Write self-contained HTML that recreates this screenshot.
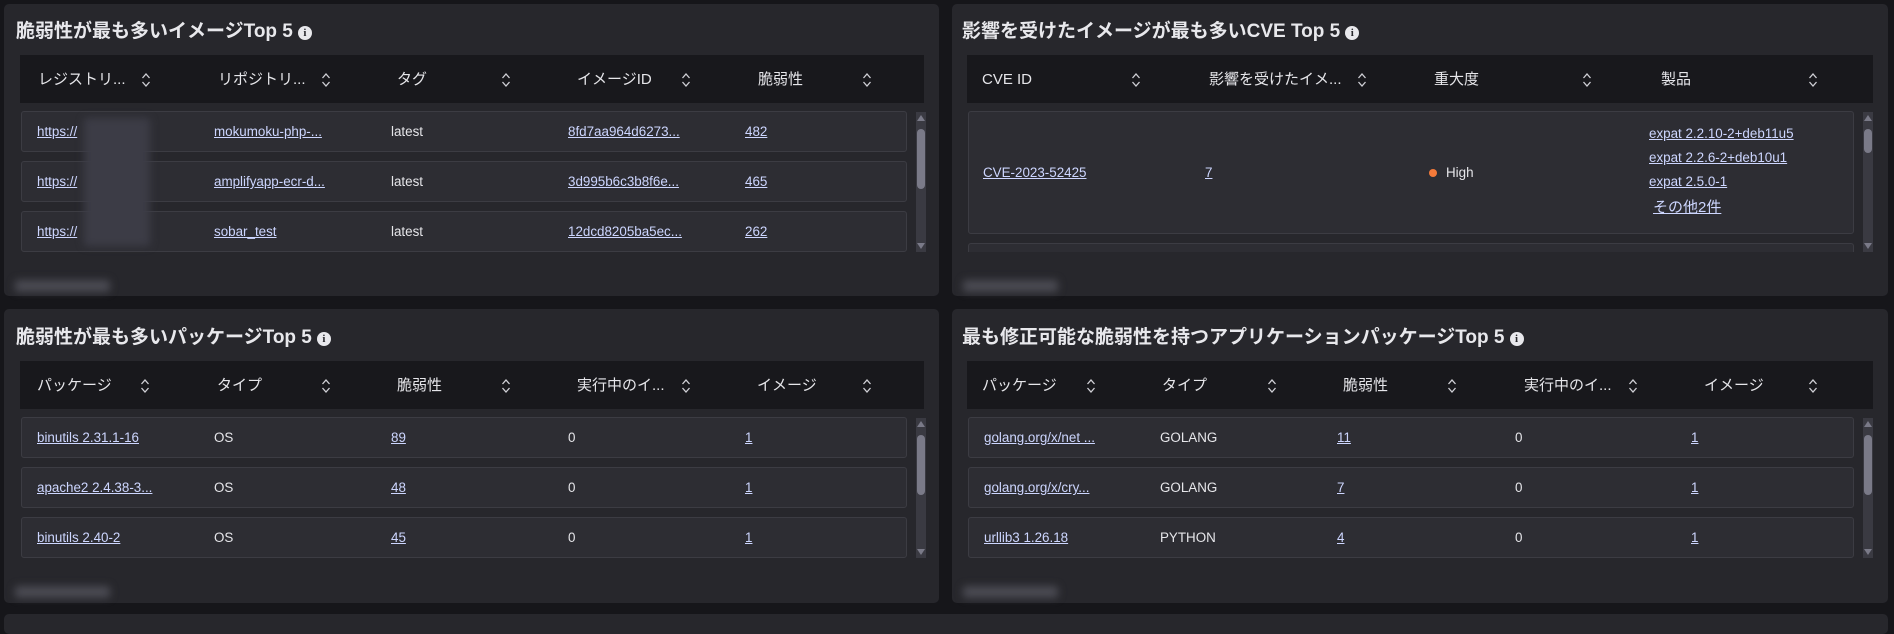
<!DOCTYPE html>
<html><head><meta charset="utf-8">
<style>
*{margin:0;padding:0;box-sizing:border-box}
body{width:1894px;height:619px;background:#16161a;font-family:"Liberation Sans","Noto Sans CJK JP",sans-serif;color:#e6e6ea;position:relative;overflow:hidden}
.p{position:absolute;background:#27272c;border-radius:5px}
.t{position:absolute;font-size:19px;font-weight:bold;color:#e8e8ec;white-space:nowrap;line-height:24px}
.t .i{display:inline-block;width:14px;height:14px;border-radius:50%;background:#e8e8ec;color:#27272c;font-size:11px;text-align:center;line-height:14px;font-family:"Liberation Serif",serif;margin-left:5px;vertical-align:1px}
.h{position:absolute;background:#18181c;height:48px}
.h span{position:absolute;top:16px;font-size:15px;line-height:18px;white-space:nowrap;color:#e6e6ea}
.h svg{position:absolute;top:17px}
.r{position:absolute;background:#2d2d33;border:1px solid #3c3c43;border-radius:3px;height:41px}
.c{position:absolute;font-size:13.4px;white-space:nowrap;line-height:16px}
a,.l{color:#cdd6ff;text-decoration:underline}
.sb{position:absolute;width:10px;background:#3a3a42}
.sb .th{position:absolute;left:1px;width:8px;background:#7a7a88;border-radius:4px}
.sb .up,.sb .dn{position:absolute;left:1px;width:0;height:0;border-left:4px solid transparent;border-right:4px solid transparent}
.sb .up{top:3px;border-bottom:6px solid #7a7a88}
.sb .dn{bottom:3px;border-top:6px solid #7a7a88}
.bl{position:absolute;background:#4a4a52;filter:blur(4px);border-radius:3px}
</style></head><body>

<svg width="0" height="0" style="position:absolute"><defs><symbol id="s" viewBox="0 0 10 16"><path d="M1.5 6 L5 2 L8.5 6 M1.5 10 L5 14 L8.5 10" fill="none" stroke="#d0d0d6" stroke-width="1.3"/></symbol></defs></svg>

<!-- Panel 1 -->
<div class="p" style="left:4px;top:4px;width:935px;height:292px"></div>
<div class="t" style="left:16px;top:20px">脆弱性が最も多いイメージTop 5<span class="i">i</span></div>
<div class="h" style="left:20px;top:55px;width:904px">
<span style="left:18px">レジストリ...</span><svg style="left:121px" width="10" height="16"><use href="#s"/></svg>
<span style="left:198px">リポジトリ...</span><svg style="left:301px" width="10" height="16"><use href="#s"/></svg>
<span style="left:377px">タグ</span><svg style="left:481px" width="10" height="16"><use href="#s"/></svg>
<span style="left:557px">イメージID</span><svg style="left:661px" width="10" height="16"><use href="#s"/></svg>
<span style="left:738px">脆弱性</span><svg style="left:842px" width="10" height="16"><use href="#s"/></svg>
</div>
<div class="r" style="left:21px;top:111px;width:886px"></div>
<div class="r" style="left:21px;top:161px;width:886px"></div>
<div class="r" style="left:21px;top:211px;width:886px"></div>
<div class="c" style="left:37px;top:124px"><span class="l">https://</span></div>
<div class="c" style="left:214px;top:124px"><span class="l">mokumoku-php-...</span></div>
<div class="c" style="left:391px;top:124px">latest</div>
<div class="c" style="left:568px;top:124px"><span class="l">8fd7aa964d6273...</span></div>
<div class="c" style="left:745px;top:124px"><span class="l">482</span></div>
<div class="c" style="left:37px;top:174px"><span class="l">https://</span></div>
<div class="c" style="left:214px;top:174px"><span class="l">amplifyapp-ecr-d...</span></div>
<div class="c" style="left:391px;top:174px">latest</div>
<div class="c" style="left:568px;top:174px"><span class="l">3d995b6c3b8f6e...</span></div>
<div class="c" style="left:745px;top:174px"><span class="l">465</span></div>
<div class="c" style="left:37px;top:224px"><span class="l">https://</span></div>
<div class="c" style="left:214px;top:224px"><span class="l">sobar_test</span></div>
<div class="c" style="left:391px;top:224px">latest</div>
<div class="c" style="left:568px;top:224px"><span class="l">12dcd8205ba5ec...</span></div>
<div class="c" style="left:745px;top:224px"><span class="l">262</span></div>
<div class="bl" style="left:84px;top:118px;width:66px;height:128px;background:#3c3c46"></div>
<div class="sb" style="left:916px;top:112px;height:140px"><div class="up"></div><div class="th" style="top:17px;height:60px"></div><div class="dn"></div></div>
<div class="bl" style="left:15px;top:280px;width:95px;height:12px"></div>

<!-- Panel 2 -->
<div class="p" style="left:952px;top:4px;width:936px;height:292px"></div>
<div class="t" style="left:962px;top:20px">影響を受けたイメージが最も多いCVE Top 5<span class="i">i</span></div>
<div class="h" style="left:967px;top:55px;width:906px">
<span style="left:15px">CVE ID</span><svg style="left:164px" width="10" height="16"><use href="#s"/></svg>
<span style="left:242px">影響を受けたイメ...</span><svg style="left:390px" width="10" height="16"><use href="#s"/></svg>
<span style="left:467px">重大度</span><svg style="left:615px" width="10" height="16"><use href="#s"/></svg>
<span style="left:694px">製品</span><svg style="left:841px" width="10" height="16"><use href="#s"/></svg>
</div>
<div class="r" style="left:968px;top:111px;width:886px;height:123px"></div>
<div style="position:absolute;left:968px;top:243px;width:886px;height:9px;background:#2d2d33;border:1px solid #3c3c43;border-bottom:none;border-radius:3px 3px 0 0"></div>
<div class="c" style="left:983px;top:165px"><span class="l">CVE-2023-52425</span></div>
<div class="c" style="left:1205px;top:165px"><span class="l">7</span></div>
<div style="position:absolute;left:1429px;top:169px;width:8px;height:8px;border-radius:50%;background:#f47a3a"></div>
<div class="c" style="left:1446px;top:165px">High</div>
<div class="c" style="left:1649px;top:126px"><span class="l">expat 2.2.10-2+deb11u5</span></div>
<div class="c" style="left:1649px;top:150px"><span class="l">expat 2.2.6-2+deb10u1</span></div>
<div class="c" style="left:1649px;top:174px"><span class="l">expat 2.5.0-1</span></div>
<div class="c" style="left:1653px;top:199px;font-size:15px;line-height:18px"><span class="l">その他2件</span></div>
<div class="sb" style="left:1863px;top:112px;height:140px"><div class="up"></div><div class="th" style="top:17px;height:24px"></div><div class="dn"></div></div>
<div class="bl" style="left:963px;top:280px;width:95px;height:12px"></div>

<!-- Panel 3 -->
<div class="p" style="left:4px;top:309px;width:935px;height:294px"></div>
<div class="t" style="left:16px;top:326px">脆弱性が最も多いパッケージTop 5<span class="i">i</span></div>
<div class="h" style="left:20px;top:361px;width:904px">
<span style="left:17px">パッケージ</span><svg style="left:120px" width="10" height="16"><use href="#s"/></svg>
<span style="left:197px">タイプ</span><svg style="left:301px" width="10" height="16"><use href="#s"/></svg>
<span style="left:377px">脆弱性</span><svg style="left:481px" width="10" height="16"><use href="#s"/></svg>
<span style="left:557px">実行中のイ...</span><svg style="left:661px" width="10" height="16"><use href="#s"/></svg>
<span style="left:737px">イメージ</span><svg style="left:842px" width="10" height="16"><use href="#s"/></svg>
</div>
<div class="r" style="left:21px;top:417px;width:886px"></div>
<div class="r" style="left:21px;top:467px;width:886px"></div>
<div class="r" style="left:21px;top:517px;width:886px"></div>
<div class="c" style="left:37px;top:430px"><span class="l">binutils 2.31.1-16</span></div>
<div class="c" style="left:214px;top:430px">OS</div>
<div class="c" style="left:391px;top:430px"><span class="l">89</span></div>
<div class="c" style="left:568px;top:430px">0</div>
<div class="c" style="left:745px;top:430px"><span class="l">1</span></div>
<div class="c" style="left:37px;top:480px"><span class="l">apache2 2.4.38-3...</span></div>
<div class="c" style="left:214px;top:480px">OS</div>
<div class="c" style="left:391px;top:480px"><span class="l">48</span></div>
<div class="c" style="left:568px;top:480px">0</div>
<div class="c" style="left:745px;top:480px"><span class="l">1</span></div>
<div class="c" style="left:37px;top:530px"><span class="l">binutils 2.40-2</span></div>
<div class="c" style="left:214px;top:530px">OS</div>
<div class="c" style="left:391px;top:530px"><span class="l">45</span></div>
<div class="c" style="left:568px;top:530px">0</div>
<div class="c" style="left:745px;top:530px"><span class="l">1</span></div>
<div class="sb" style="left:916px;top:418px;height:140px"><div class="up"></div><div class="th" style="top:17px;height:60px"></div><div class="dn"></div></div>
<div class="bl" style="left:15px;top:586px;width:95px;height:12px"></div>

<!-- Panel 4 -->
<div class="p" style="left:952px;top:309px;width:936px;height:294px"></div>
<div class="t" style="left:962px;top:326px">最も修正可能な脆弱性を持つアプリケーションパッケージTop 5<span class="i">i</span></div>
<div class="h" style="left:967px;top:361px;width:906px">
<span style="left:15px">パッケージ</span><svg style="left:119px" width="10" height="16"><use href="#s"/></svg>
<span style="left:195px">タイプ</span><svg style="left:300px" width="10" height="16"><use href="#s"/></svg>
<span style="left:376px">脆弱性</span><svg style="left:480px" width="10" height="16"><use href="#s"/></svg>
<span style="left:557px">実行中のイ...</span><svg style="left:661px" width="10" height="16"><use href="#s"/></svg>
<span style="left:737px">イメージ</span><svg style="left:841px" width="10" height="16"><use href="#s"/></svg>
</div>
<div class="r" style="left:968px;top:417px;width:886px"></div>
<div class="r" style="left:968px;top:467px;width:886px"></div>
<div class="r" style="left:968px;top:517px;width:886px"></div>
<div class="c" style="left:984px;top:430px"><span class="l">golang.org/x/net ...</span></div>
<div class="c" style="left:1160px;top:430px">GOLANG</div>
<div class="c" style="left:1337px;top:430px"><span class="l">11</span></div>
<div class="c" style="left:1515px;top:430px">0</div>
<div class="c" style="left:1691px;top:430px"><span class="l">1</span></div>
<div class="c" style="left:984px;top:480px"><span class="l">golang.org/x/cry...</span></div>
<div class="c" style="left:1160px;top:480px">GOLANG</div>
<div class="c" style="left:1337px;top:480px"><span class="l">7</span></div>
<div class="c" style="left:1515px;top:480px">0</div>
<div class="c" style="left:1691px;top:480px"><span class="l">1</span></div>
<div class="c" style="left:984px;top:530px"><span class="l">urllib3 1.26.18</span></div>
<div class="c" style="left:1160px;top:530px">PYTHON</div>
<div class="c" style="left:1337px;top:530px"><span class="l">4</span></div>
<div class="c" style="left:1515px;top:530px">0</div>
<div class="c" style="left:1691px;top:530px"><span class="l">1</span></div>
<div class="sb" style="left:1863px;top:418px;height:140px"><div class="up"></div><div class="th" style="top:17px;height:60px"></div><div class="dn"></div></div>
<div class="bl" style="left:963px;top:586px;width:95px;height:12px"></div>

<div class="p" style="left:4px;top:614px;width:1884px;height:20px"></div>
</body></html>
